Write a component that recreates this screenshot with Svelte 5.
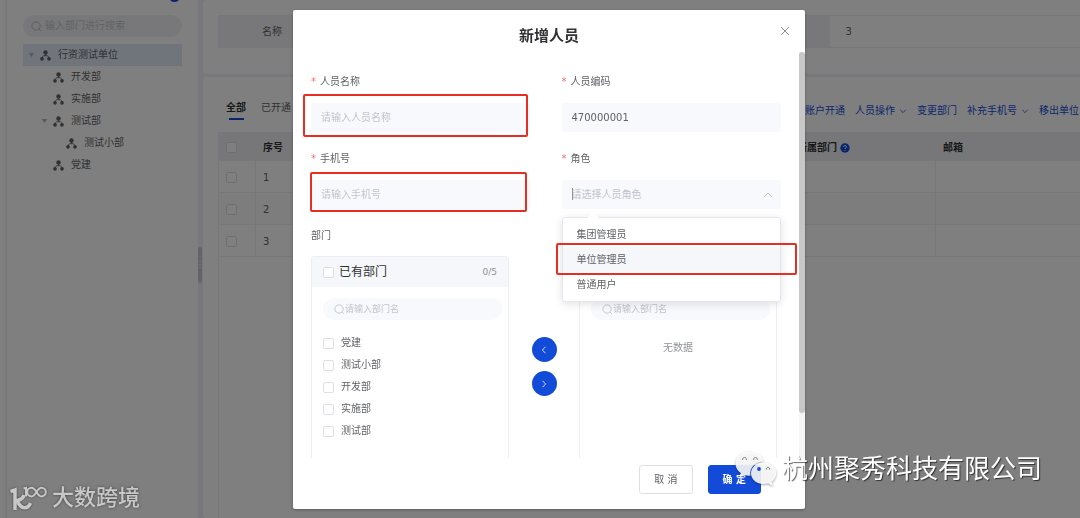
<script lang="ts">
  type TreeNode = { label: string; depth: number; open?: boolean; current?: boolean };

  const tree: TreeNode[] = [
    { label: '行资测试单位', depth: 0, open: true, current: true },
    { label: '开发部', depth: 1 },
    { label: '实施部', depth: 1 },
    { label: '测试部', depth: 1, open: true },
    { label: '测试小部', depth: 2 },
    { label: '党建', depth: 1 },
  ];
  const actions = [
    { label: '账户开通', menu: false },
    { label: '人员操作', menu: true },
    { label: '变更部门', menu: false },
    { label: '补充手机号', menu: true },
    { label: '移出单位', menu: false },
  ];
  const rows = [1, 2, 3];
  const roles = ['集团管理员', '单位管理员', '普通用户'];
  const departments = ['党建', '测试小部', '开发部', '实施部', '测试部'];

  let name = $state('');
  let code = $state('470000001');
  let phone = $state('');
  let role = $state('');
  let activeRole = $state('单位管理员');
</script>

{#snippet searchIcon()}
  <svg class="search-icon" viewBox="0 0 12 12" aria-hidden="true">
    <circle cx="5.5" cy="5.5" r="4.5" />
    <path d="M8.7 8.7 L10.8 10.8" />
  </svg>
{/snippet}

{#snippet chevron(d: string)}
  <svg class="chevron" viewBox="0 0 10 10" aria-hidden="true"><path {d} /></svg>
{/snippet}

<div class="page">
  <div class="rail"></div>
  <aside class="sidebar">
    <div class="sidebar-head"><button class="add" aria-label="add"></button></div>
    <label class="search">
      {@render searchIcon()}
      <input type="text" placeholder="输入部门进行搜索" />
    </label>
    <ul class="tree">
      {#each tree as node}
        <li class="node depth-{node.depth}" class:current={node.current}>
          <span class="caret" class:open={node.open}></span>
          <svg class="org" viewBox="0 0 12 12" aria-hidden="true">
            <circle cx="6" cy="2.8" r="2.4" />
            <circle cx="2.2" cy="9.6" r="2" />
            <circle cx="9.8" cy="9.6" r="2" />
            <path d="M6 4 V6 M2.2 9 V8 L4 6.2 H8 L9.800 8 V9" />
          </svg>
          <span>{node.label}</span>
        </li>
      {/each}
    </ul>
  </aside>
  <div class="splitter">
    <div class="grip">
      <svg viewBox="0 0 4 10" aria-hidden="true"><path d="M2 1 V9" /></svg>
    </div>
  </div>

  <main class="main">
    <section class="card info">
      <div class="info-grid">
        <div class="info-label">名称</div>
        <div class="info-value"></div>
        <div class="info-label"></div>
        <div class="info-value">3</div>
      </div>
    </section>
    <section class="card people">
      <div class="toolbar">
        <nav class="tabs">
          <a class="tab active" href="#all">全部</a>
          <a class="tab" href="#opened">已开通</a>
        </nav>
        <div class="actions">
          {#each actions as action}
            <button class="action">
              {action.label}
              {#if action.menu}{@render chevron('M1.5 3.5 L5 7 L8.5 3.5')}{/if}
            </button>
          {/each}
        </div>
      </div>
      <div class="table-wrap">
        <table>
          <colgroup>
            <col class="col-check" /><col /><col class="col-dept" /><col class="col-mail" />
          </colgroup>
          <thead>
            <tr>
              <th><input type="checkbox" aria-label="all" /></th>
              <th>序号</th>
              <th class="dept">
                所属部门
                <svg class="help" viewBox="0 0 10 10" aria-hidden="true">
                  <circle cx="5" cy="5" r="4.7" />
                  <path d="M3.6 4 A1.4 1.4 0 1 1 5.5 5.2 Q5 5.4 5 6 M5 7.2 V8" />
                </svg>
              </th>
              <th>邮箱</th>
            </tr>
          </thead>
          <tbody>
            {#each rows as row}
              <tr>
                <td><input type="checkbox" aria-label="row {row}" /></td>
                <td>{row}</td>
                <td class="dept"></td>
                <td></td>
              </tr>
            {/each}
          </tbody>
        </table>
      </div>
    </section>
  </main>
</div>

<div class="overlay">
  <div class="dialog" role="dialog" aria-labelledby="dialog-title">
    <header class="dialog-head">
      <h2 id="dialog-title">新增人员</h2>
      <button class="close" aria-label="close">
        <svg viewBox="0 0 10 10" aria-hidden="true"><path d="M1 1 L9 9 M9 1 L1 9" /></svg>
      </button>
    </header>

    <div class="dialog-body">
      <form class="form" id="person">
        <div class="field">
          <label class="required" for="name">人员名称</label>
          <div class="control">
            <input id="name" type="text" placeholder="请输入人员名称" bind:value={name} />
            <span class="mark mark-name"></span>
          </div>
        </div>
        <div class="field">
          <label class="required" for="code">人员编码</label>
          <div class="control"><input id="code" type="text" bind:value={code} /></div>
        </div>
        <div class="field">
          <label class="required" for="phone">手机号</label>
          <div class="control">
            <input id="phone" type="text" placeholder="请输入手机号" bind:value={phone} />
            <span class="mark mark-phone"></span>
          </div>
        </div>
        <div class="field">
          <label class="required" for="role">角色</label>
          <div class="control">
            <select id="role" bind:value={role}>
              <option value="">请选择人员角色</option>
              {#each roles as item}<option value={item}>{item}</option>{/each}
            </select>
            <span class="cursor"></span>
            <span class="select-arrow">{@render chevron('M1 7 L5 3 L9 7')}</span>
            <ul class="menu">
              {#each roles as item}
                <li class:hover={item === activeRole}>
                  {item}
                  {#if item === activeRole}<span class="mark mark-role"></span>{/if}
                </li>
              {/each}
            </ul>
          </div>
        </div>

        <div class="field wide">
          <span class="field-title">部门</span>
          <div class="transfer">
            <div class="panel">
              <div class="panel-head">
                <label><input type="checkbox" />已有部门</label>
                <span class="count">0/5</span>
              </div>
              <label class="search">
                {@render searchIcon()}
                <input type="text" placeholder="请输入部门名" />
              </label>
              <ul class="options">
                {#each departments as dept}
                  <li><label><input type="checkbox" />{dept}</label></li>
                {/each}
              </ul>
            </div>
            <div class="movers">
              <button type="button" aria-label="left">{@render chevron('M6.8 1 L3 5 L6.8 9')}</button>
              <button type="button" aria-label="right">{@render chevron('M3.2 1 L7 5 L3.2 9')}</button>
            </div>
            <div class="panel">
              <div class="panel-head"></div>
              <label class="search">
                {@render searchIcon()}
                <input type="text" placeholder="请输入部门名" />
              </label>
              <p class="empty">无数据</p>
            </div>
          </div>
        </div>
      </form>
      <div class="scrollbar"><div class="thumb"></div></div>
    </div>

    <footer class="dialog-foot">
      <button class="btn">取 消</button>
      <button class="btn primary" form="person">确 定</button>
    </footer>
  </div>
</div>

<div class="stamp stamp-left">
  <svg class="stamp-logo" viewBox="0 0 38 26" aria-hidden="true">
    <path class="thick" d="M1.500 6.500 L6 5 V25" />
    <path class="thick" d="M15 10 Q14 14.500 8 15.500 Q11 22.500 15.500 22.800 Q19.500 22.800 21.500 18" />
    <path class="thin" d="M14.500 3.500 L17 2.800 V11.500" />
    <path class="thin" d="M27.500 7 C26 4.500 24.500 2.800 22.500 2.800 A4.300 4.300 0 0 0 22.500 11.400 C24.500 11.400 26 9.500 27.500 7 C29 4.500 30.500 2.800 32.500 2.800 A4.300 4.300 0 0 1 32.500 11.400 C30.500 11.400 29 9.500 27.500 7" />
  </svg>
  <span>大数跨境</span>
</div>

<div class="stamp stamp-right">
  <svg class="wechat" viewBox="0 0 42 36" aria-hidden="true">
    <path d="M14.500 0.500 C6.500 0.500 0.500 5.800 0.500 12.500 C0.500 16.500 2.600 20 6 22.200 L4.600 26.500 L9.500 24 C11.200 24.500 13 24.700 15.500 24.600 C14 17 20 10.500 28.500 10.400 C27 4.500 21.500 0.500 14.500 0.500 Z" />
    <path d="M28.500 11.500 C21.500 11.500 16 16.200 16 22.200 C16 28.300 21.500 33 28.500 33 C30 33 31.500 32.800 33 32.300 L38 35.200 L36.700 30.800 C39.500 28.800 41.300 25.700 41.300 22.200 C41.300 16.200 35.500 11.500 28.500 11.500 Z" />
    <path class="eye" d="M7.700 9 A1.900 1.900 0 1 1 11.300 9" />
    <path class="eye" d="M18.700 9 A1.900 1.900 0 1 1 22.300 9" />
    <circle class="eye-dot" cx="24" cy="18" r="1.900" />
    <path class="eye" d="M31.500 18.500 A1.600 1.600 0 1 1 34.500 18.500" />
  </svg>
  <span>杭州聚秀科技有限公司</span>
</div>

<style>
  :global(body) {
    --blue: #134bd9;
    --line: #ebeef5;
    --soft: #f8f9fc;
    --hint: #c0c4cc;
    --text: #606266;
    font: 10px/22px 'DejaVu Sans', 'Noto Sans CJK SC', sans-serif;
    color: var(--text);
    overflow: hidden;
  }
  ul,
  p,
  h2 {
    margin: 0;
    padding: 0;
    list-style: none;
  }
  button,
  input,
  select {
    font: inherit;
    color: inherit;
    border: 0;
    padding: 0;
    margin: 0;
    background: none;
    outline: 0;
  }
  input::placeholder {
    color: var(--hint);
    opacity: 1;
  }
  input[type='checkbox'] {
    appearance: none;
    box-sizing: border-box;
    flex: none;
    width: 11px;
    height: 11px;
    border: 1px solid #dcdfe6;
    border-radius: 2px;
    background: #fff;
    vertical-align: middle;
  }
  svg {
    flex: none;
    fill: none;
    stroke: currentColor;
  }
  .chevron {
    width: 8px;
    height: 8px;
  }
  .search {
    display: flex;
    align-items: center;
    height: 22px;
    border-radius: 11px;
    color: var(--hint);
  }
  .search input {
    flex: 1;
    min-width: 0;
  }
  .search-icon {
    width: 11px;
    height: 11px;
  }

  /* page behind the dialog */
  .page {
    display: flex;
    height: 100vh;
    background: #f0f1f8;
    overflow: hidden;
  }
  .rail {
    width: 5px;
    margin-right: 2px;
    background: #fff;
  }
  .sidebar {
    width: 159px;
    padding: 0 16px;
    background: #fff;
  }
  .sidebar-head {
    display: flex;
    align-items: flex-end;
    justify-content: flex-end;
    height: 2px;
    padding-right: 2px;
    margin-bottom: 13px;
    overflow: hidden;
  }
  .add {
    flex: none;
    width: 11px;
    height: 11px;
    border-radius: 50%;
    background: var(--blue);
  }
  .sidebar .search {
    padding: 0 8px;
    gap: 3px;
    background: #f0f1f6;
    color: #b0b3ba;
  }
  .tree {
    margin-top: 7px;
  }
  .node {
    display: flex;
    align-items: center;
    height: 22px;
    padding-left: 5px;
  }
  .node.depth-1 {
    padding-left: 18px;
  }
  .node.depth-2 {
    padding-left: 31px;
  }
  .node.current {
    background: #e1eaf8;
  }
  .caret {
    width: 7px;
    margin-right: 5px;
  }
  .caret.open {
    height: 4px;
    background: #b0b3ba;
    clip-path: polygon(10% 0, 90% 0, 50% 100%);
  }
  .org {
    width: 11px;
    height: 11px;
    margin-right: 7px;
  }
  .org circle {
    fill: currentColor;
    stroke: none;
  }
  .splitter {
    display: flex;
    align-items: center;
    width: 5px;
  }
  .grip {
    display: flex;
    align-items: center;
    width: 4px;
    height: 36px;
    margin-top: 12px;
    border-radius: 2px;
    background: #c8cad0;
    color: #fff;
  }
  .grip svg {
    width: 4px;
    height: 10px;
    stroke-dasharray: 1 2;
  }
  .main {
    display: flex;
    flex: 1;
    flex-direction: column;
    gap: 3px;
    min-width: 0;
  }
  .card {
    padding-left: 15px;
    background: #fff;
    border-radius: 4px 0 0 4px;
  }
  .info {
    padding-top: 15px;
    padding-bottom: 26px;
  }
  .info-grid {
    display: grid;
    grid-template-columns: 106px 8fr 106px 5fr;
    height: 31px;
    line-height: 31px;
    border: 1px solid var(--line);
    border-right: 0;
  }
  .info-label {
    background: #f0f1f6;
    text-align: center;
  }
  .info-value {
    padding-left: 15px;
  }
  .people {
    display: flex;
    flex: 1;
    flex-direction: column;
  }
  .toolbar {
    display: flex;
    justify-content: space-between;
    height: 55px;
  }
  .tabs {
    display: flex;
    gap: 15px;
    padding: 20px 0 0 8px;
  }
  .tab {
    height: 24px;
    color: inherit;
    text-decoration: none;
  }
  .tab.active {
    position: relative;
    font-weight: 700;
    color: #303133;
  }
  .tab.active::after {
    content: '';
    position: absolute;
    left: 3px;
    right: 2px;
    bottom: 1px;
    height: 2px;
    background: var(--blue);
  }
  .actions {
    display: flex;
    gap: 10px;
    padding: 23px 1px 0 0;
  }
  .action {
    display: flex;
    align-items: center;
    gap: 4px;
    height: 22px;
    color: var(--blue);
    white-space: nowrap;
  }
  .table-wrap {
    flex: 1;
    border-left: 1px solid var(--line);
  }
  table {
    width: 100%;
    table-layout: fixed;
    border-collapse: separate;
    border-spacing: 0;
  }
  .col-check {
    width: 37px;
  }
  .col-dept {
    width: 146px;
  }
  .col-mail {
    width: 144px;
  }
  th,
  td {
    box-sizing: border-box;
    height: 32px;
    padding: 2px 7px 0 7px;
    border-bottom: 1px solid var(--line);
    text-align: left;
  }
  th {
    height: 29px;
    background: #eeeff4;
    color: #303133;
    border-top: 1px solid var(--line);
  }
  th:first-child,
  td:first-child,
  th.dept,
  td.dept {
    border-right: 1px solid var(--line);
  }
  tr:nth-child(even) td {
    background: #fafafa;
  }
  .help {
    width: 10px;
    height: 10px;
    vertical-align: middle;
  }
  .help circle {
    fill: var(--blue);
    stroke: none;
  }
  .help path {
    stroke: #fff;
  }

  /* dialog */
  .overlay {
    position: fixed;
    inset: 0;
    display: flex;
    justify-content: center;
    padding: 10px 0 9px 18px;
    background: rgba(0, 0, 0, 0.5);
  }
  .dialog {
    display: flex;
    flex-direction: column;
    width: 512px;
    max-width: 100%;
    border-radius: 2px;
    background: #fff;
    box-shadow: 0 1px 3px rgba(0, 0, 0, 0.3);
  }
  .dialog-head {
    position: relative;
    padding: 15px 0 5px;
    text-align: center;
  }
  .dialog-head h2 {
    font-size: 15px;
    line-height: 22px;
    color: #303133;
  }
  .close {
    position: absolute;
    top: 10px;
    right: 14px;
    width: 12px;
    height: 22px;
    color: #909399;
  }
  .close svg {
    display: block;
    width: 10px;
    height: 10px;
    margin: auto;
  }
  .dialog-body {
    display: flex;
    flex: 1;
    min-height: 0;
    overflow: hidden;
  }
  .form {
    display: grid;
    flex: 1;
    grid-template-columns: 1fr 1fr;
    align-content: start;
    gap: 16px 31px;
    padding: 19px 18px 0;
  }
  .scrollbar {
    width: 6px;
    background: #f5f5f5;
  }
  .thumb {
    height: 89%;
    border-radius: 3px;
    background: #c7c7c7;
  }
  .field {
    display: flex;
    flex-direction: column;
    gap: 10px;
    min-width: 0;
  }
  .field.wide {
    grid-column: 1 / -1;
    gap: 9px;
  }
  .required::before {
    content: '*';
    margin-right: 4px;
    color: #f56c6c;
  }
  .control {
    position: relative;
    height: 29px;
  }
  .control input,
  .control select {
    box-sizing: border-box;
    width: 100%;
    height: 100%;
    padding: 0 10px;
    border-radius: 3px;
    background: var(--soft);
  }
  .control select {
    appearance: none;
    color: var(--hint);
  }
  .cursor {
    position: absolute;
    top: 8px;
    left: 10px;
    width: 1px;
    height: 12px;
    background: #909399;
  }
  .select-arrow {
    position: absolute;
    top: 0;
    right: 8px;
    line-height: 29px;
    color: var(--hint);
  }
  .select-arrow .chevron,
  .select-arrow :global(svg) {
    width: 10px;
    height: 10px;
    vertical-align: middle;
  }
  .menu {
    position: absolute;
    z-index: 2;
    top: 37px;
    left: 0;
    right: 0;
    padding: 4px 0;
    border: 1px solid #e4e7ed;
    border-radius: 3px;
    background: #fff;
    box-shadow: 0 2px 9px rgba(0, 0, 0, 0.12);
  }
  .menu::before {
    content: '';
    position: absolute;
    top: -4px;
    left: 26px;
    width: 8px;
    height: 8px;
    background: #fff;
    transform: rotate(45deg);
  }
  .menu li {
    position: relative;
    height: 25px;
    padding: 0 14px;
    line-height: 25px;
  }
  .menu li.hover {
    background: #f5f7fa;
  }
  .mark {
    position: absolute;
    border: 2px solid #e62e22;
    border-radius: 2px;
    pointer-events: none;
  }
  .mark-name {
    inset: -9px 3px -5px -8px;
  }
  .mark-phone {
    inset: -8px 4px -3px -1px;
  }
  .mark-role {
    inset: -4px -17px -3px -7px;
  }
  .transfer {
    display: flex;
    align-items: center;
    margin-right: 4px;
  }
  .panel {
    box-sizing: border-box;
    flex: 1;
    height: 221px;
    border: 1px solid var(--line);
    border-radius: 3px;
    overflow: hidden;
  }
  .panel-head {
    display: flex;
    align-items: center;
    justify-content: space-between;
    height: 30px;
    padding: 0 11px;
    background: #f5f7fa;
  }
  .panel-head label {
    display: flex;
    align-items: center;
    gap: 5px;
    font-size: 12px;
    color: #303133;
  }
  .count {
    font-size: 9px;
    color: #909399;
  }
  .panel .search {
    margin: 11px 6px 0 11px;
    padding: 0 11px;
    background: var(--soft);
    font-size: 9px;
  }
  .options {
    padding: 12px 11px;
  }
  .options label {
    display: flex;
    align-items: center;
    gap: 7px;
    height: 22px;
  }
  .movers {
    display: flex;
    flex-direction: column;
    align-items: center;
    gap: 9px;
    width: 70px;
  }
  .movers button {
    display: flex;
    align-items: center;
    justify-content: center;
    width: 25px;
    height: 25px;
    border-radius: 50%;
    background: var(--blue);
    color: #fff;
  }
  .empty {
    padding-top: 17px;
    text-align: center;
    color: #909399;
  }
  .dialog-foot {
    display: flex;
    justify-content: flex-end;
    gap: 15px;
    padding: 7px 44px 15px 0;
  }
  .btn {
    box-sizing: border-box;
    height: 29px;
    padding: 1px 14px 0;
    border: 1px solid #dcdfe6;
    border-radius: 3px;
    white-space: nowrap;
  }
  .btn.primary {
    border-color: var(--blue);
    background: var(--blue);
    color: #fff;
    font-weight: 700;
  }

  /* watermarks over the whole window */
  .stamp {
    position: fixed;
    display: flex;
    align-items: center;
    white-space: nowrap;
    pointer-events: none;
  }
  .stamp-left {
    left: 9px;
    bottom: 4px;
    gap: 5px;
    font-size: 22px;
    line-height: 32px;
    font-weight: 500;
    color: #c8c8c8;
    text-shadow: 0 0 3px rgba(0, 0, 0, 0.5);
  }
  .stamp-logo {
    width: 38px;
    height: 26px;
    filter: drop-shadow(0 0 1px rgba(0, 0, 0, 0.5));
  }
  .thick {
    stroke-width: 3.5;
  }
  .thin {
    stroke-width: 2;
  }
  .stamp-right {
    right: 38px;
    bottom: 31px;
    gap: 5px;
    font-size: 26px;
    line-height: 36px;
    color: #fff;
    text-shadow: 1px 1px 1px rgba(0, 0, 0, 0.6);
  }
  .wechat {
    width: 42px;
    height: 36px;
    filter: drop-shadow(0 1px 1px rgba(0, 0, 0, 0.4));
  }
  .wechat path {
    fill: rgba(255, 255, 255, 0.88);
    stroke: none;
  }
  .wechat .eye {
    fill: none;
    stroke: #777;
  }
  .eye-dot {
    fill: var(--blue);
    stroke: none;
  }
</style>
